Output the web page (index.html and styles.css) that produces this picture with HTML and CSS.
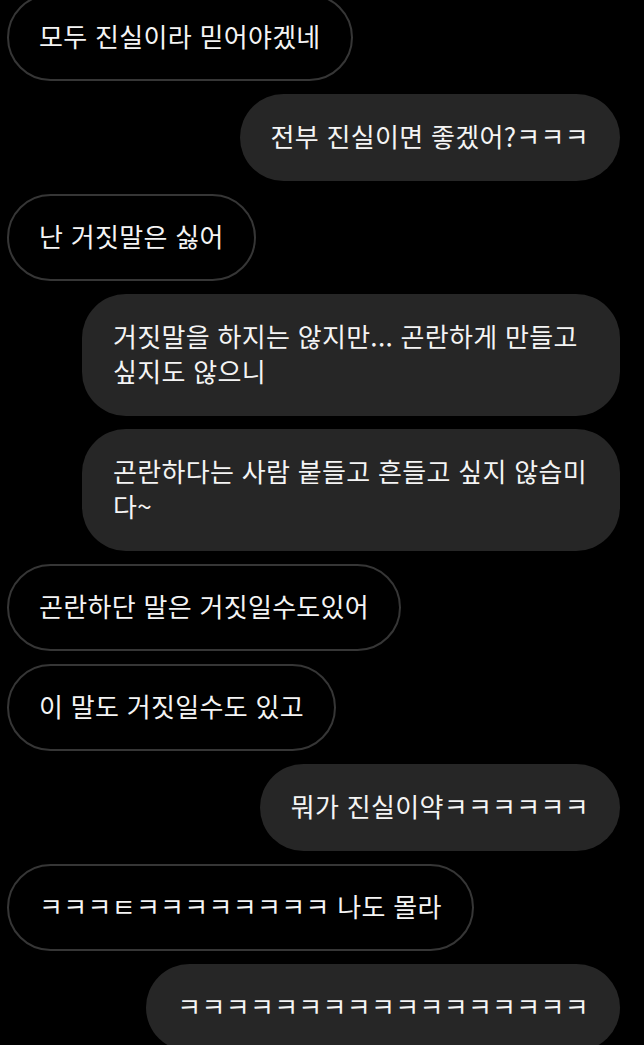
FILE: index.html
```html
<!DOCTYPE html>
<html lang="ko">
<head>
<meta charset="utf-8">
<link rel="stylesheet" href="styles.css">
</head>
<body>
<div class="chat">
  <div class="msg in">모두 진실이라 믿어야겠네</div>
  <div class="msg out">전부 진실이면 좋겠어?ㅋㅋㅋ</div>
  <div class="msg in">난 거짓말은 싫어</div>
  <div class="msg out">거짓말을 하지는 않지만... 곤란하게 만들고 싶지도 않으니</div>
  <div class="msg out">곤란하다는 사람 붙들고 흔들고 싶지 않습미다~</div>
  <div class="msg in">곤란하단 말은 거짓일수도있어</div>
  <div class="msg in">이 말도 거짓일수도 있고</div>
  <div class="msg out">뭐가 진실이약ㅋㅋㅋㅋㅋㅋ</div>
  <div class="msg in">ㅋㅋㅋㅌㅋㅋㅋㅋㅋㅋㅋㅋ 나도 몰라</div>
  <div class="msg out">ㅋㅋㅋㅋㅋㅋㅋㅋㅋㅋㅋㅋㅋㅋㅋㅋㅋ</div>
</div>
</body>
</html>
```

FILE: styles.css
```css
html, body {
  margin: 0;
  padding: 0;
  background: #000;
}
body {
  width: 644px;
  height: 1045px;
  overflow: hidden;
  font-family: "Noto Sans CJK KR", "Noto Sans", sans-serif;
  color: #f4f4f4;
}
.chat {
  display: flex;
  flex-direction: column;
  gap: 13px;
  margin-top: -6px;
  padding: 0 24px 0 7px;
}
.msg {
  box-sizing: border-box;
  max-width: 538px;
  font-size: 26px;
  line-height: 35px;
  letter-spacing: 0.3px;
  padding: 24px 31px 28px;
  border-radius: 44px;
}
.in {
  align-self: flex-start;
  border: 2px solid #363636;
  padding: 22px 30px 26px;
}
.out {
  align-self: flex-end;
  background: #262626;
}
```
